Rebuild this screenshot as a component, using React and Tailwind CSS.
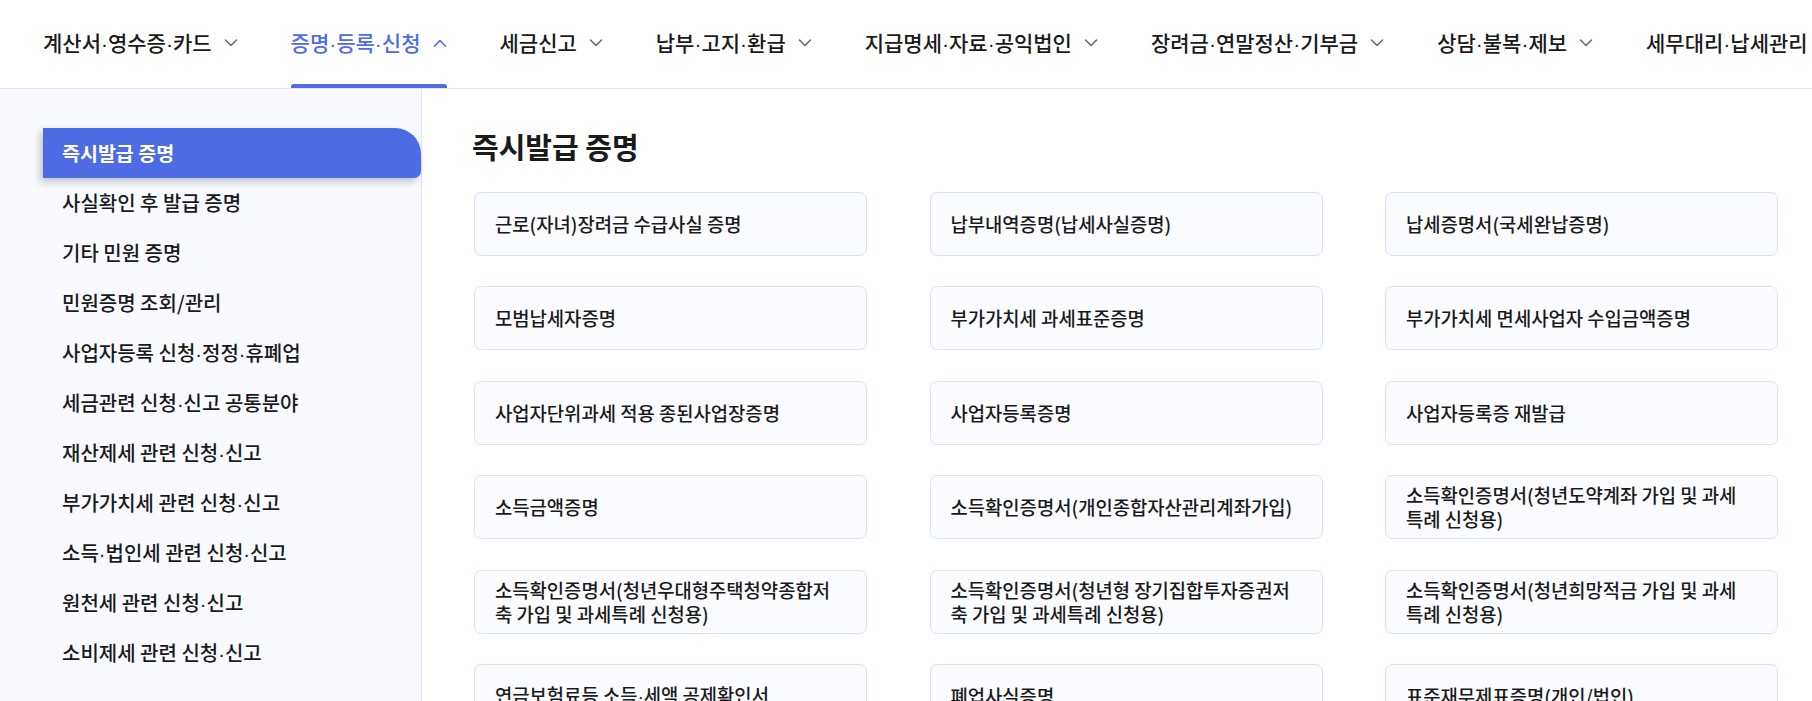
const navItems = [
  { label: '계산서·영수증·카드' },
  { label: '증명·등록·신청', active: true },
  { label: '세금신고' },
  { label: '납부·고지·환급' },
  { label: '지급명세·자료·공익법인' },
  { label: '장려금·연말정산·기부금' },
  { label: '상담·불복·제보' },
  { label: '세무대리·납세관리' },
];

const sideItems = [
  '즉시발급 증명',
  '사실확인 후 발급 증명',
  '기타 민원 증명',
  '민원증명 조회/관리',
  '사업자등록 신청·정정·휴폐업',
  '세금관련 신청·신고 공통분야',
  '재산제세 관련 신청·신고',
  '부가가치세 관련 신청·신고',
  '소득·법인세 관련 신청·신고',
  '원천세 관련 신청·신고',
  '소비제세 관련 신청·신고',
];

// each entry is a list of lines, as they wrap in the card
const cards = [
  ['근로(자녀)장려금 수급사실 증명'],
  ['납부내역증명(납세사실증명)'],
  ['납세증명서(국세완납증명)'],
  ['모범납세자증명'],
  ['부가가치세 과세표준증명'],
  ['부가가치세 면세사업자 수입금액증명'],
  ['사업자단위과세 적용 종된사업장증명'],
  ['사업자등록증명'],
  ['사업자등록증 재발급'],
  ['소득금액증명'],
  ['소득확인증명서(개인종합자산관리계좌가입)'],
  ['소득확인증명서(청년도약계좌 가입 및 과세', '특례 신청용)'],
  ['소득확인증명서(청년우대형주택청약종합저', '축 가입 및 과세특례 신청용)'],
  ['소득확인증명서(청년형 장기집합투자증권저', '축 가입 및 과세특례 신청용)'],
  ['소득확인증명서(청년희망적금 가입 및 과세', '특례 신청용)'],
  ['연금보험료등 소득·세액 공제확인서'],
  ['폐업사실증명'],
  ['표준재무제표증명(개인/법인)'],
];

// the CJK font draws "·" with wide side bearings; take a narrow one from Liberation Sans
function Dotted({ text }) {
  const parts = text.split('·');
  return parts.map((p, i) => (
    <span key={i}>
      {i > 0 && <span className="font-['Liberation_Sans']">·</span>}
      {p}
    </span>
  ));
}

function Chevron({ up }) {
  return (
    <svg width="14" height="8" viewBox="0 0 14 8" fill="none" stroke="currentColor" strokeWidth="1.6" strokeLinecap="round" strokeLinejoin="round">
      <path d={up ? 'M1.5 7l5.5-5.5 5.5 5.5' : 'M1.5 1l5.5 5.5 5.5-5.5'} />
    </svg>
  );
}

export default function App() {
  return (
    <div className="w-[1812px] h-[701px] overflow-hidden bg-white text-[#1a1a1a] font-['Noto_Sans_CJK_KR','Noto_Sans',sans-serif]">
      <nav className="h-[89px] border-b border-[#e5e7eb] flex items-stretch pl-[43px] gap-[53px] whitespace-nowrap overflow-hidden">
        {navItems.map((item) => (
          <div
            key={item.label}
            className={`relative flex items-center gap-3 pb-[2px] text-[21px] font-medium ${
              item.active ? 'text-[#4d6ce6]' : 'text-[#1a1a1a]'
            }`}
          >
            <span>
              <Dotted text={item.label} />
            </span>
            <span className={item.active ? 'text-[#4d6ce6]' : 'text-[#6b6b75]'}>
              <Chevron up={item.active} />
            </span>
            {item.active && (
              <span className="absolute left-0 right-0 bottom-[-1px] h-[5px] rounded-t-[3px] rounded-b-[1px] bg-[#4d6ce6]" />
            )}
          </div>
        ))}
      </nav>

      <div className="flex h-[612px]">
        <aside className="w-[422px] shrink-0 bg-[#f8faff] border-r border-[#dfe6f8] pt-[39px]">
          {sideItems.map((label, i) =>
            i === 0 ? (
              <div
                key={label}
                className="ml-[43px] h-[50px] flex items-center pl-[19px] bg-[#4d6ce3] text-white font-bold text-[19.5px] rounded-tr-[26px] rounded-br-[7px] shadow-[-3px_4px_8px_rgba(0,0,0,0.22)]"
              >
                {label}
              </div>
            ) : (
              <div key={label} className="h-[50px] flex items-center pl-[62px] text-[20px] font-medium text-[#1a1a1a]">
                <span>
                  <Dotted text={label} />
                </span>
              </div>
            )
          )}
        </aside>

        <main className="flex-1 pl-[52px] pr-[34px] pt-[38px]">
          <h2 className="text-[29px] font-bold leading-[38px] text-[#1a1a1a] -ml-[2px]">즉시발급 증명</h2>
          <div className="mt-[27px] grid grid-cols-3 gap-x-[62.5px] gap-y-[30.4px]">
            {cards.map((lines) => (
              <div
                key={lines.join('')}
                className="h-[64px] flex flex-col justify-center px-5 rounded-[7px] border border-[#d9e2fa] bg-[#fbfcff] text-[18.8px] leading-[24px] font-medium text-[#1a1a1a] whitespace-nowrap"
              >
                {lines.map((line) => (
                  <span key={line}>
                    <Dotted text={line} />
                  </span>
                ))}
              </div>
            ))}
          </div>
        </main>
      </div>
    </div>
  );
}
